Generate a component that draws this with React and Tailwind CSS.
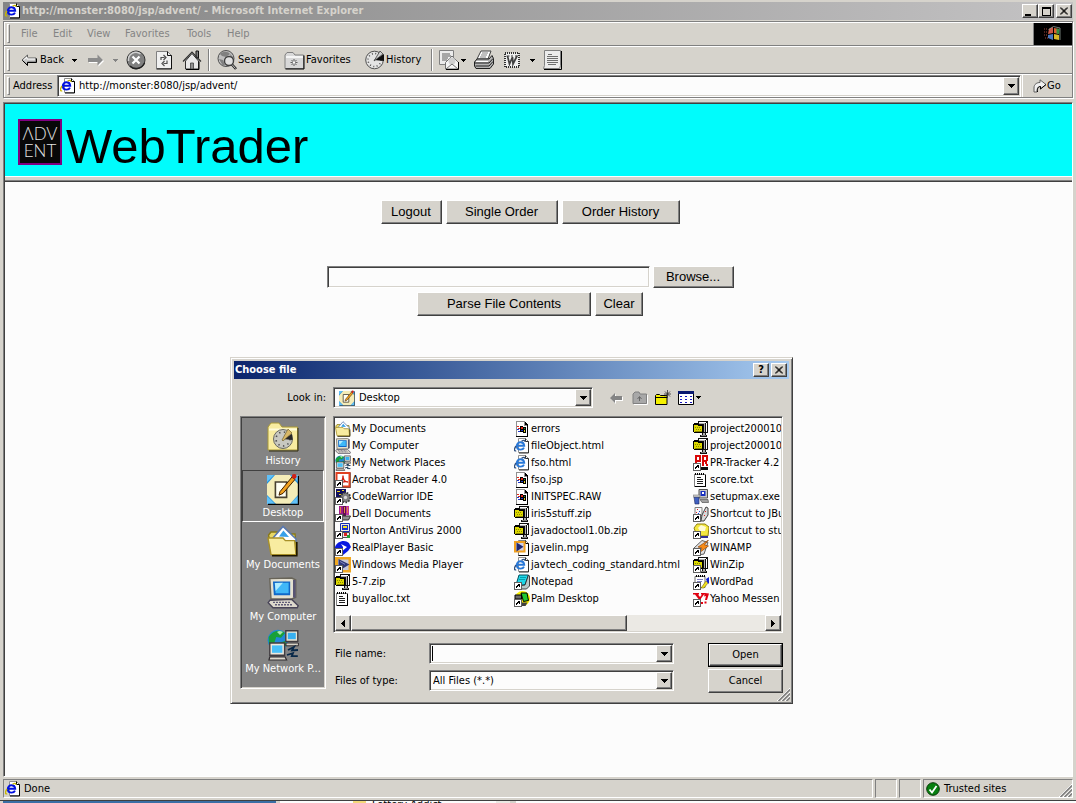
import React, { useState } from 'react';

const raised = 'border border-t-white border-l-white border-r-[#404040] border-b-[#404040] shadow-[inset_-1px_-1px_0_#808080] bg-[#d6d3cc]';
const sunken = 'border border-t-[#808080] border-l-[#808080] border-r-white border-b-white shadow-[inset_1px_1px_0_#404040,inset_-1px_-1px_0_#d6d3cc] bg-[#fcfcfc]';

/* ---------- icon helpers ---------- */

const Ico = ({ size = 16, box = 16, className = '', children }) => (
  <svg width={size} height={size} viewBox={`0 0 ${box} ${box}`} className={`shrink-0 ${className}`} aria-hidden="true">
    {children}
  </svg>
);

const Shortcut = () => (
  <g shapeRendering="crispEdges">
    <path d="M0 8h8v8H0z" fill="#606060" />
    <path d="M1 9h6v6H1z" fill="#fff" />
    <path d="M3 10h3v3H5v-1H4v1H3v1H2v-2h1v-1h1z" fill="#000" />
  </g>
);

const Caret = () => (
  <svg width="7" height="4" viewBox="0 0 7 4" className="shrink-0" aria-hidden="true" shapeRendering="crispEdges">
    <path d="M0 0h7v1h-1v1h-1v1h-1v1h-1v-1h-1v-1h-1v-1h-1z" fill="currentColor" />
  </svg>
);

const SmallCaret = () => (
  <svg width="5" height="3" viewBox="0 0 5 3" className="shrink-0" aria-hidden="true" shapeRendering="crispEdges">
    <path d="M0 0h5v1h-1v1h-1v1h-1v-1h-1v-1h-1z" fill="currentColor" />
  </svg>
);

const IePage = ({ soft = false }) => (
  <Ico>
    <path d="M4.500.500h7l3 3v11h-10z" fill="#fff" stroke="#909090" />
    <path d="M11.500.500v3h3v11.500H5" fill="none" stroke={soft ? '#303030' : '#000'} />
    <path d="M2.600 7.700h7.600C10 5.200 8.600 4.300 6.600 4.300 4.200 4.300 2.800 5.900 2.800 8s1.400 3.600 3.800 3.600c1.600 0 2.800-.600 3.400-2" fill="none" stroke={soft ? '#2878d8' : '#0010e0'} strokeWidth="1.900" />
    <path d="M2.200 12.800C-.400 13.600.200 10.500 2 8M7.500 3.200C9.500 2 11.200 2 10.800 3.800" fill="none" stroke={soft ? '#305080' : '#c8b800'} strokeWidth="1.300" />
  </Ico>
);

/* ---------- file icons ---------- */

const Zip = ({ children }) => (
  <Ico>
    <g shapeRendering="crispEdges">
      <path d="M5 0h10v12h-2v2h1v2H7v-2h2v-2H5z" fill="#101010" />
      <path d="M6 1h7v1H6zM13 2h1v9h-1z" fill="#fff" />
      <path d="M6 2h6v9h-1V3H6zM10 12h2v2h-2z" fill="#b0b0b0" />
      <path d="M8 14h5v1H8z" fill="#808080" />
      <path d="M0 3h1V2h4v1h1v1h4v8H1v-1H0z" fill="#000" />
      <path d="M1 4h4v1h4v6H1z" fill="#dcd800" />
      <path d="M2 6h1v1H2zM4 6h1v1H4zM6 6h1v1H6zM3 8h1v1H3zM5 8h1v1H5zM7 8h1v1H7zM2 10h7v1H2z" fill="#8c8800" />
    </g>
    {children}
  </Ico>
);

const Txt = () => (
  <Ico>
    <g shapeRendering="crispEdges">
      <path d="M1.500 2.500h11v12h-11z" fill="#fff" stroke="#808080" />
      <path d="M12 3h1v12H2v-1h10z" fill="#000" />
      <path d="M2 1h1v2H2zM4 1h1v2H4zM6 1h1v2H6zM8 1h1v2H8zM10 1h1v2h-1z" fill="#000" />
      <path d="M4 5h4v1H4zM4 7h6v1H4zM4 9h6v1H4zM4 11h6v1H4z" fill="#202020" />
    </g>
  </Ico>
);

const WinFile = () => (
  <Ico>
    <g shapeRendering="crispEdges">
      <path d="M2 0h9v1h1v1h1v1h1v13H2z" fill="#000" />
      <path d="M2 0h9v4h2v11H2z" fill="#909090" />
      <path d="M3 1h7v4h3v10H3z" fill="#fff" />
      <path d="M6 5h3v1h3v6H9v-1H6z" fill="#000" />
      <path d="M7 6h2v2H7zM3 5h2v1H3zM4 7h2v1H4z" fill="#e02818" />
      <path d="M10 7h1v1h-1z" fill="#18a030" />
      <path d="M7 9h2v1H7zM3 8h2v1H3zM4 10h2v1H4z" fill="#2038c8" />
      <path d="M10 9h1v2h-1z" fill="#e8d020" />
    </g>
  </Ico>
);

const DocsFolder = ({ size = 16 }) => (
  <Ico size={size}>
    <path d="M.800 5 2 3.500h3l1 1h8l1 10H2.500z" fill="#e8d868" stroke="#887818" strokeWidth=".700" />
    <path d="M3 6.500 8 .700 14.500 7v1H3z" fill="#fff" stroke="#5878b0" strokeWidth=".800" />
    <path d="M6 5.700 8.200 2.800 11 6z" fill="#38a0e8" />
    <path d="M.500 6.500H8l1.200 1.300h4.600l.700 7H2z" fill="#f8eca0" stroke="#a89028" strokeWidth=".700" />
    <path d="M14.900 8.500v6.900H2.500" fill="none" stroke="#201800" strokeWidth=".800" />
  </Ico>
);

const Computer = ({ size = 16 }) => (
  <Ico size={size}>
    <path d="M1.400.800 12.400.500l2 1v8.600L12.400 11H2z" fill="#e4e0d0" stroke="#686458" strokeWidth=".700" />
    <path d="M3 2.200h8.600v6.900H3.400z" fill="#1068c8" />
    <path d="m3.900 3 6.900-.100v5.200H4.300z" fill="#40b8f8" />
    <path d="M3.900 3 8 2.900 4.300 7z" fill="#b0ecff" />
    <path d="M13 1.500h1.300v8.800H13z" fill="#585474" />
    <path d="M1.500 11.600 12.400 11.200l3.200 3.200-.500 1H3L.600 12.800z" fill="#dcd8cc" stroke="#484458" strokeWidth=".700" />
    <path d="M3 12.700h8.500M4 13.900h9" stroke="#605c78" strokeWidth=".700" strokeDasharray="1 .500" />
  </Ico>
);

const Network = ({ size = 16 }) => (
  <Ico size={size}>
    <circle cx="5.500" cy="5.600" r="5.200" fill="#2088d8" />
    <path d="M.800 4C3 .800 6 0 9 2L7 4.400 4.600 4 3.500 7.500 1 8zM6 7l3-1 1 2-3 2z" fill="#18a038" />
    <path d="M5 1.500c1-.800 2-.500 3 0L6.500 3z" fill="#a8e8b0" />
    <path d="M9.400.900h6v5.300h-6z" fill="#e8e4d4" stroke="#403c40" strokeWidth=".700" />
    <path d="M10.400 1.900h4v3.200h-4z" fill="#38b0f0" />
    <path d="M9.500 7h6.200v1.400H9.500z" fill="#d8d4c8" stroke="#302c30" strokeWidth=".500" />
    <path d="M1.400 7h7.400v6.100H1.400z" fill="#ece8dc" stroke="#403c40" strokeWidth=".700" />
    <path d="M2.500 8.200h5.200v3.700H2.500z" fill="#48c0f8" />
    <path d="M1.400 13.900h7.600l.800 1.600H1z" fill="#dcd8cc" stroke="#302c30" strokeWidth=".600" />
    <path d="m10.500 10.500 3-1.500-1 1.700 3-.200M10 13l3-.900-.600 1.500h3" fill="none" stroke="#082848" strokeWidth=".900" />
  </Ico>
);

const DesktopIcon = ({ size = 16 }) => (
  <Ico size={size}>
    <path d="M0 1h15.500v14.500H0z" fill="#2090e0" />
    <path d="M0 1h3.500L0 4.500zM12 1h3.500v3.500zM0 11.500v4h4zM15.500 11.500v4h-4z" fill="#60c0f8" />
    <path d="M4 1h7.500l4 4.500v5.500l-4 4.500H4.500L0 11V5.500z" fill="#f4ecb8" />
    <path d="M4.200 4.500h5.600v7.700H4.200z" fill="#fffff4" stroke="#484030" strokeWidth=".800" />
    <path d="m6.500 9.300 6-7.300 1.500 1.200-6 7-2 .900z" fill="#f0a020" stroke="#402000" strokeWidth=".500" />
    <circle cx="13.600" cy="1.700" r="1.200" fill="#d02018" />
    <path d="M15.700 1.500v14.200H.500" fill="none" stroke="#000" strokeWidth=".600" />
  </Ico>
);

const HistoryFolder = ({ size = 32 }) => (
  <Ico size={size} box={32}>
    <path d="M1 29V6l3-4h8l3 4h15.500v23z" fill="#f8eca0" stroke="#a89838" />
    <path d="M2 8.500h28" stroke="#fffbd8" strokeWidth="2" />
    <path d="M31 7v23H2" fill="none" stroke="#302c10" />
    <circle cx="16" cy="18" r="9.500" fill="#c8c8c0" stroke="#686860" />
    <circle cx="16" cy="18" r="7" fill="none" stroke="#505050" strokeWidth="1.600" strokeDasharray="1.400 3.400" />
    <path d="m16 18 9-5 .600 6z" fill="#282828" />
    <path d="m15 19 6-11 4 4-9 8z" fill="#d8b868" stroke="#605020" strokeWidth=".600" />
  </Ico>
);

const Acrobat = () => (
  <Ico>
    <path d="M1.500 1h13v13.500h-13z" fill="#fff" stroke="#e04020" strokeWidth="2" />
    <path d="M5 11.500c2-2 3-5 3-8 0 4 2 6.500 5 6.500-3-1-6 0-8 1.500z" fill="#fff" stroke="#d02010" strokeWidth="1.300" />
    <path d="M15.700.500v15H8" fill="none" stroke="#401008" strokeWidth=".600" />
    <Shortcut />
  </Ico>
);

const CodeWarrior = () => (
  <Ico>
    <path d="M1 0h10v9H1z" fill="#101060" />
    <path d="M2 2h3v1H2zM4 5h3v1H4zM7 1h2v1H7z" fill="#f0d820" />
    <circle cx="10.500" cy="8.500" r="4.800" fill="#808080" stroke="#383838" strokeWidth="1.800" strokeDasharray="1.600 1.300" />
    <circle cx="10.500" cy="8.500" r="1.700" fill="#d8d8d8" />
    <Shortcut />
  </Ico>
);

const Dell = () => (
  <Ico>
    <path d="M4 0h4v9H4z" fill="#a01888" />
    <path d="M8 0h3v10H8z" fill="#601050" />
    <path d="M11 0h3v9h-3z" fill="#c030a0" />
    <path d="M5 1h1v6H5zM9 1h1v6H9zM12 1h1v6h-1z" fill="#e08040" />
    <path d="M7 10h8.500l-2 4H7z" fill="#909090" stroke="#303030" />
    <Shortcut />
  </Ico>
);

const Norton = () => (
  <Ico>
    <path d="M5.500.500h9v8h-9z" fill="#f0ecd8" stroke="#1830b0" />
    <path d="M7 2h6v5H7z" fill="#1830d0" />
    <path d="M8 3h4v2H8z" fill="#f0e020" />
    <path d="M3.500 9.500h11v5h-11z" fill="#e8e8e8" stroke="#505050" />
    <path d="M9 10h3v3H9z" fill="#e02020" />
    <path d="M12 12h3v3h-3z" fill="#20a030" />
    <Shortcut />
  </Ico>
);

const Real = () => (
  <Ico>
    <path d="M0 7C2 1 10-1 14 3l2 4-3 4-5 4V9L0 10z" fill="#0818e0" />
    <path d="M6 4 12 7 8 10.500V7z" fill="#fff" />
    <Shortcut />
  </Ico>
);

const MediaPlayer = () => (
  <Ico>
    <path d="M0 0h16v15.500H0z" fill="#f0a820" />
    <path d="M3 2.500h10.500V13H3z" fill="#c8c8d8" />
    <path d="m3.500 2 11 5.500-11 6.500z" fill="#303878" />
    <path d="m5 4.500 5 2.800" stroke="#8088c0" />
    <Shortcut />
  </Ico>
);

const Mpg = () => (
  <Ico>
    <path d="M4.500.500h7l3 3v12h-10z" fill="#fff" stroke="#808080" />
    <path d="M11.500.500v3h3v12h-10" fill="none" stroke="#000" />
    <path d="M1 2h9.500v9.500H1z" fill="#d0d0e8" stroke="#f0a020" strokeWidth="2" />
    <path d="m2.500 2.500 7 4.300-7 4.700z" fill="#202870" />
  </Ico>
);

const Notepad = () => (
  <Ico>
    <path d="M5 1h9.500L11 11H2z" fill="#20d8e8" stroke="#005060" />
    <path d="m11 11 3.500-10 1 1v10l-3 3H5l-1-3z" fill="#b8c8c8" stroke="#202020" strokeWidth=".800" />
    <path d="M6 3.500h6M5 5.500h6" stroke="#0090a0" strokeWidth=".800" />
    <Shortcut />
  </Ico>
);

const Palm = () => (
  <Ico>
    <circle cx="8.500" cy="7.500" r="7.500" fill="#f8f000" />
    <path d="M7 2h6l1.500 7.500-5 1z" fill="#20c830" stroke="#000" />
    <path d="M1 4h6.500v4H1z" fill="#686868" stroke="#000" />
    <path d="M8 11.500h5.500l-2 3.500H8z" fill="#404040" />
    <Shortcut />
  </Ico>
);

const PrTracker = () => (
  <Ico>
    <g shapeRendering="crispEdges">
      <path d="M2 0h5l1 1v5L7 7H4v4H2zM4 2v3h2V2zM9 0h5l1 1v4l-1 1 1 5h-2l-1-4h-1v4H9zM11 2v3h2V2z" fill="#d80808" fillRule="evenodd" />
      <path d="M8 12h7v3H8z" fill="#101010" />
    </g>
    <Shortcut />
  </Ico>
);

const Setup = () => (
  <Ico>
    <path d="M6 .500h8.500v8.500H6z" fill="#c8c8c8" stroke="#505050" />
    <path d="M7.500 2h5v5h-5z" fill="#1830c0" />
    <path d="M9 3h2v2H9z" fill="#fff" />
    <path d="M7 10.500h8l.500 3H9z" fill="#a0a0a0" stroke="#404040" strokeWidth=".600" />
    <path d="M1 8h5v7H2z" fill="#4060c0" stroke="#202860" strokeWidth=".600" />
    <path d="M0 6h7v2H0z" fill="#d0d0d0" stroke="#606060" strokeWidth=".500" />
  </Ico>
);

const JBuilder = () => (
  <Ico>
    <path d="M2 1.500h7v8H2z" fill="#f8f8f8" stroke="#808080" />
    <path d="M4 3h1v1H4zM3 6h1v1H3z" fill="#e02020" />
    <path d="M6 5h1v1H6zM5 7h1v1H5z" fill="#2040e0" />
    <path d="m9 9 4-8 2 1v7l-4 6H8z" fill="#d8d8d8" stroke="#404040" />
    <path d="M12 5h1v1h-1zM11 9h1v1h-1z" fill="#e02020" />
    <Shortcut />
  </Ico>
);

const StuFolder = () => (
  <Ico>
    <path d="M1 5 4 1h8l4 3-1 9H4z" fill="#f4e840" stroke="#908010" />
    <path d="m5 5 3-3 5 2-1 4H7z" fill="#fffcd8" />
    <path d="M8 13h7v2H8z" fill="#303090" />
    <Shortcut />
  </Ico>
);

const Winamp = () => (
  <Ico>
    <path d="M1 8 9 .500l6 2L11 14l-6 1z" fill="#e0e0e0" stroke="#606060" />
    <path d="M15.500 0 5 7l4 1-3 5 9.500-7-4-1z" fill="#f88c18" stroke="#803800" strokeWidth=".600" />
    <Shortcut />
  </Ico>
);

const WordPad = () => (
  <Ico>
    <path d="M2 2.500h10v11H2z" fill="#fff" stroke="#707070" />
    <path d="M3 1h1v2H3zM5 1h1v2H5zM7 1h1v2H7zM9 1h1v2H9zM11 1h1v2h-1z" fill="#000" />
    <path d="M4 5h6v1H4zM4 7h5v1H4z" fill="#8080c0" />
    <path d="m8 14 5-7 2 2-4 5z" fill="#f0e020" stroke="#605000" strokeWidth=".500" />
    <path d="m13 5 3-2v7l-2-2z" fill="#1020d0" />
    <Shortcut />
  </Ico>
);

const Yahoo = () => (
  <Ico>
    <path d="M0 2h6v1.600H5L7 6l2-2.400H8V2h4v1.600h-1L8 7.600V11h2v2H4v-2h1.500V8L2 3.600H0z" fill="#e00010" />
    <path d="m12 2 4 .400L14 9h-2l1-4-2 .600zM11.500 10.500h2v2h-2z" fill="#e00010" />
    <Shortcut />
  </Ico>
);

/* ---------- browser toolbar icons ---------- */

const BackIcon = () => (
  <Ico>
    <path d="M1 8 6.500 3v3H15v4H6.500v3z" fill="#c8c8c8" stroke="#606060" />
    <path d="m1.500 8.500 5 5v-3h9v-4" fill="none" stroke="#000" />
    <path d="M2.500 8 6 5v2h8" fill="none" stroke="#fff" />
  </Ico>
);

const ForwardIcon = () => (
  <Ico>
    <path d="M16 9 10.500 14.500V11H1V7h9.500V4z" fill="#fff" />
    <path d="M15 8 9.500 2.500V6H0v4h9.500v3.500z" fill="#8c8c8c" />
  </Ico>
);

const StopIcon = () => (
  <Ico size={20} box={20}>
    <circle cx="10" cy="10" r="9" fill="#808080" stroke="#303030" />
    <path d="M2.500 11a7.500 7.500 0 0 1 12-7" fill="none" stroke="#d0d0d0" strokeWidth="1.500" />
    <path d="M4 16a9 9 0 0 0 14.500-3" fill="none" stroke="#202020" strokeWidth="1.500" />
    <path d="m6.500 6.500 7 7M13.500 6.500l-7 7" stroke="#fff" strokeWidth="2.200" />
  </Ico>
);

const RefreshIcon = () => (
  <Ico size={20} box={20}>
    <path d="M2.500 1.500h11l4 4v13h-15z" fill="#f0f0f0" stroke="#808080" />
    <path d="M13.500 1.500v4h4v13.500h-15" fill="none" stroke="#101010" />
    <path d="M7 10V7.500h3.500M9.500 5l2.500 2.500L9.500 10" fill="none" stroke="#505050" strokeWidth="1.200" />
    <path d="M13 10.500v3H9.500M10.500 11 8 13.500l2.500 2.500" fill="none" stroke="#505050" strokeWidth="1.200" />
  </Ico>
);

const HomeIcon = () => (
  <Ico size={20} box={20}>
    <path d="M14 1h2.500v7H14z" fill="#808080" stroke="#101010" />
    <path d="M3.500 11v8h13v-8L10 3.500z" fill="#e8e8e8" stroke="#303030" />
    <path d="M1 11.500 10 2l9 9.500" fill="none" stroke="#303030" strokeWidth="1.200" />
    <path d="M8.500 13h3v6h-3z" fill="#909090" stroke="#404040" strokeWidth=".800" />
    <path d="M17 11.500V19.500H4" fill="none" stroke="#000" />
  </Ico>
);

const SearchIcon = () => (
  <Ico size={20} box={20}>
    <circle cx="9" cy="8.500" r="8" fill="#c0c0c0" stroke="#505050" />
    <path d="M3 4c3-3 8-3 10 0L9 7 5 6zM2 9l4 1 2 5-2 1zM13 4l3 3-2 2z" fill="#808080" />
    <circle cx="12" cy="11" r="4.500" fill="#e0e0e0" stroke="#404040" strokeWidth="1.400" />
    <path d="m15 14.500 4 4.500" stroke="#202020" strokeWidth="2.600" />
    <path d="m15 14.500 3.500 4" stroke="#c8c8c8" strokeWidth="1" />
  </Ico>
);

const FavoritesIcon = () => (
  <Ico size={21} box={21}>
    <path d="M1 18.500V5l2-2.500h6L11 5h8.500v13.500z" fill="#d8d8d8" stroke="#808080" />
    <path d="M2 7h17" stroke="#fff" strokeWidth="1.500" />
    <path d="M20 5.500V19H1.500" fill="none" stroke="#000" />
    <path d="M10 9v7M6.500 12.500h7M7.500 10l5 5M12.500 10l-5 5" stroke="#404040" strokeWidth=".800" />
    <circle cx="10" cy="12.500" r="1.200" fill="#fff" />
  </Ico>
);

const HistoryIcon = () => (
  <Ico size={20} box={20}>
    <circle cx="9.500" cy="10" r="8.800" fill="#e4e4e4" stroke="#505050" />
    <circle cx="9.500" cy="10" r="6.500" fill="none" stroke="#505050" strokeWidth="1.500" strokeDasharray="1 2.400" />
    <path d="m9 10 10-6v7z" fill="#101010" />
    <path d="M9 11 15 1l3 3z" fill="#d0d0d0" stroke="#404040" strokeWidth=".800" />
  </Ico>
);

const MailIcon = () => (
  <Ico size={20} box={20}>
    <path d="M.500.500h14v14H.500z" fill="#ececec" stroke="#808080" />
    <path d="M3 4h8M3 6h9M3 8h6M3 10h5" stroke="#606060" />
    <path d="M6.500 12.500 13 6l6.500 6.500v6.500h-13z" fill="#f4f4f4" stroke="#707070" />
    <circle cx="13" cy="11" r="3.500" fill="#d0d0d0" />
    <path d="m7 19 6-5 6 5" fill="none" stroke="#707070" />
    <path d="M19.500 12v7.500H7" fill="none" stroke="#000" />
  </Ico>
);

const PrintIcon = () => (
  <Ico size={20} box={20}>
    <path d="M7 1h10l-3 8H3z" fill="#fff" stroke="#404040" />
    <path d="M8 3h6M7 5h6M6 7h6" stroke="#808080" />
    <path d="M3 9h12l3-3.500 1.500 3V14L16 18.500H2L.500 16v-4z" fill="#b4b4b4" stroke="#202020" />
    <path d="M1 13h14l4-4.500M1.500 16H15l4-4.500" fill="none" stroke="#202020" />
    <path d="M2 11.500h12" stroke="#fff" />
  </Ico>
);

const WordIcon = () => (
  <Ico>
    <path d="M1 1h14v14H1z" fill="#f0f0f0" stroke="#303030" strokeWidth="2" strokeDasharray="1 1" />
    <path d="m3.500 4 2 8 3-7 .500 7 4-8" fill="none" stroke="#404040" strokeWidth="1.700" />
    <path d="M2.500 4h3M7 4h2M11 4h3" stroke="#404040" />
  </Ico>
);

const NotesIcon = () => (
  <Ico size={20} box={20}>
    <path d="M1.500.500h16v15l-1 3H.500l1-3z" fill="#ececec" stroke="#808080" />
    <path d="M18.500 1v18.500H1" fill="none" stroke="#000" />
    <path d="M5 4.500h4M4 6.500h11M4 8.500h11M4 10.500h11M4 12.500h11M5 14.500h8" stroke="#606060" strokeWidth=".900" />
  </Ico>
);

const GoIcon = () => (
  <Ico size={14} box={14}>
    <path d="M1 13V9c0-4 3-5.500 6-5.500V.800L13 5.500 7.500 10V7.500C5 7.500 4 9 4 13z" fill="#f0f0f0" stroke="#606060" />
    <path d="M4.500 13c-.500-4 1-5.500 3-5.500V10L13 5.500" fill="none" stroke="#000" />
  </Ico>
);

const WindowsFlag = () => (
  <Ico size={20} box={20}>
    <path d="m6 5 4-2v6L5 10z" fill="#c85848" />
    <path d="m11 4 5 1v5l-5-1z" fill="#d86030" />
    <path d="m13.500 4.500 3 .500-.500 5-2.500-.500z" fill="#309040" />
    <path d="m5 11 5-1v6l-5-2z" fill="#4878c0" />
    <path d="m11 10 5 1v5l-5-1z" fill="#d8b828" />
    <path d="M1 5h3M1 8h3M1 11h3M2 14h3" stroke="#a04840" strokeDasharray="1 1" />
    <path d="m5.500 5.500 5-3 6.500 1.500v12" fill="none" stroke="#a0b0a8" strokeWidth=".700" />
  </Ico>
);

const Grip = () => <span className="w-[3px] self-stretch my-[2px] ml-[3px] border border-t-white border-l-white border-r-[#808080] border-b-[#808080]" />;

const ToolSep = () => <span className="w-[2px] h-[22px] border-l border-l-[#808080] border-r border-r-white" />;

const ResizeGrip = () => (
  <svg width="13" height="13" viewBox="0 0 13 13" className="shrink-0" aria-hidden="true">
    <path d="M0 13 13 0M4 13l9-9M8 13l5-5" stroke="#fff" />
    <path d="M1.500 13 13 1.500M5.500 13 13 5.500M9.500 13 13 9.500" stroke="#808080" strokeWidth="1.600" />
  </svg>
);

const WinButton = ({ label, children }) => (
  <button aria-label={label} className={`w-4 h-[14px] flex items-center justify-center ${raised}`}>
    {children}
  </button>
);

const CloseGlyph = () => (
  <Ico size={8} box={8}><path d="m0 .500 7 7M1 .500l7 7M7 .500l-7 7M8 .500l-7 7" stroke="#000" /></Ico>
);

const PageButton = ({ className, children }) => (
  <button className={`font-['Liberation_Sans',Arial,sans-serif] text-[13px] leading-4 whitespace-nowrap text-black ${raised} ${className}`}>
    {children}
  </button>
);

const ComboArrow = () => (
  <span className={`w-4 shrink-0 self-stretch flex items-center justify-center ${raised}`}><Caret /></span>
);

/* ---------- data ---------- */

const menus = [
  ['File', 'w-8'], ['Edit', 'w-[34px]'], ['View', 'w-[38px]'], ['Favorites', 'w-[62px]'], ['Tools', 'w-10'], ['Help', 'w-10'],
];

const places = [
  { name: 'History', icon: <HistoryFolder /> },
  { name: 'Desktop', icon: <DesktopIcon size={32} /> },
  { name: 'My Documents', icon: <DocsFolder size={32} /> },
  { name: 'My Computer', icon: <Computer size={32} /> },
  { name: 'My Network P...', icon: <Network size={32} /> },
];

const html = <IePage soft />;

const fileColumns = [
  [
    ['My Documents', <DocsFolder />],
    ['My Computer', <Computer />],
    ['My Network Places', <Network />],
    ['Acrobat Reader 4.0', <Acrobat />],
    ['CodeWarrior IDE', <CodeWarrior />],
    ['Dell Documents', <Dell />],
    ['Norton AntiVirus 2000', <Norton />],
    ['RealPlayer Basic', <Real />],
    ['Windows Media Player', <MediaPlayer />],
    ['5-7.zip', <Zip />],
    ['buyalloc.txt', <Txt />],
  ],
  [
    ['errors', <WinFile />],
    ['fileObject.html', html],
    ['fso.html', html],
    ['fso.jsp', <WinFile />],
    ['INITSPEC.RAW', <WinFile />],
    ['iris5stuff.zip', <Zip />],
    ['javadoctool1.0b.zip', <Zip />],
    ['javelin.mpg', <Mpg />],
    ['javtech_coding_standard.html', html],
    ['Notepad', <Notepad />],
    ['Palm Desktop', <Palm />],
  ],
  [
    ['project200010', <Zip />],
    ['project200010', <Zip />],
    ['PR-Tracker 4.2', <PrTracker />],
    ['score.txt', <Txt />],
    ['setupmax.exe', <Setup />],
    ['Shortcut to JBu', <JBuilder />],
    ['Shortcut to stu', <StuFolder />],
    ['WINAMP', <Winamp />],
    ['WinZip', <Zip><Shortcut /></Zip>],
    ['WordPad', <WordPad />],
    ['Yahoo Messen', <Yahoo />],
  ],
];

/* ---------- dialog ---------- */

const FileDialog = () => {
  const [place, setPlace] = useState('Desktop');
  const [fileName, setFileName] = useState('');

  return (
    <section role="dialog" aria-label="Choose file" className="absolute left-[225px] top-[175px] w-[563px] p-[3px] border border-t-[#d6d3cc] border-l-[#d6d3cc] border-r-[#404040] border-b-[#404040] shadow-[inset_1px_1px_0_#fff,inset_-1px_-1px_0_#808080] bg-[#d6d3cc]">
      <header className="h-[18px] flex items-center gap-[2px] pl-px pr-[2px] bg-linear-to-r from-[#0c246c] to-[#a6caf0]">
        <h2 className="flex-1 font-bold text-white">Choose file</h2>
        <WinButton label="Help"><span className="font-bold text-black leading-3">?</span></WinButton>
        <WinButton label="Close"><CloseGlyph /></WinButton>
      </header>

      <div className="flex items-center pt-2 pl-[6px]">
        <label htmlFor="lookin" className="w-[86px] text-right">Look in:</label>
        <div className={`ml-[7px] w-[260px] h-[21px] p-px flex items-center ${sunken}`}>
          <span className="ml-1"><DesktopIcon /></span>
          <select id="lookin" className="flex-1 pl-1 appearance-none bg-transparent outline-none" defaultValue="Desktop">
            <option>Desktop</option>
          </select>
          <ComboArrow />
        </div>
        <div className="ml-4 flex items-center gap-[7px]">
          <button aria-label="Back" className="w-4">
            <Ico><path d="m2 9 5-5v3h7v4H7v3z" fill="#fff" /><path d="m1 8 5-5v3h7v4H6v3z" fill="#848484" /></Ico>
          </button>
          <button aria-label="Up one level">
            <Ico><path d="M1 13.500V4l2-2h4l1 2h6.500v9.500z" fill="#a8a8a8" stroke="#808080" /><path d="M15.500 5v9.500H2" fill="none" stroke="#fff" /><path d="M7.500 11V7M5.500 9l2-2.500 2 2.500" fill="none" stroke="#686868" /></Ico>
          </button>
          <button aria-label="New folder">
            <Ico><path d="M.500 14.500v-9l1-1h3l1 1h6.500v9z" fill="#f4f000" stroke="#000" /><path d="M1 7.500h11" stroke="#000" /><path d="M12.500 0v8M9 4h7M10 1.500l5 5M15 1.500l-5 5" stroke="#303030" strokeWidth=".800" /></Ico>
          </button>
          <button aria-label="View menu" className="flex items-center gap-[2px]">
            <Ico><path d="M.500 1.500h15v13H.500z" fill="#fff" stroke="#000" /><path d="M0 1h16v3H0z" fill="#081870" /><path d="M2 6h2v1H2zM7 6h2v1H7zM12 6h2v1h-2zM2 9h2v1H2zM7 9h2v1H7zM12 9h2v1h-2zM2 12h2v1H2zM7 12h2v1H7zM12 12h2v1h-2z" fill="#1818c0" /></Ico>
            <SmallCaret />
          </button>
        </div>
      </div>

      <div className="flex gap-[7px] pt-2 px-[6px] pb-[7px]">
        <nav className="w-[86px] h-[273px] shrink-0 p-px border border-t-[#808080] border-l-[#808080] border-r-white border-b-white shadow-[inset_1px_1px_0_#404040,inset_-1px_-1px_0_#d6d3cc] bg-[#848484]">
          {places.map((p) => (
            <button
              key={p.name}
              onClick={() => setPlace(p.name)}
              className={`w-full h-[52px] flex flex-col items-center pt-[2px] gap-px border whitespace-nowrap text-white ${place === p.name ? 'border-t-[#404040] border-l-[#404040] border-r-white border-b-white' : 'border-transparent'}`}
            >
              {p.icon}
              <span>{p.name}</span>
            </button>
          ))}
        </nav>

        <div className="flex-1 min-w-0">
          <div className={`h-[217px] p-px flex flex-col ${sunken}`}>
            <div className="flex-1 flex overflow-hidden pt-[2px]">
              {fileColumns.map((col, c) => (
                <ul key={c} className="w-[179px] shrink-0">
                  {col.map(([name, icon], i) => (
                    <li key={i} className="h-[17px] flex items-center gap-px whitespace-nowrap">
                      {icon}
                      <span>{name}</span>
                    </li>
                  ))}
                </ul>
              ))}
            </div>
            <div className="h-4 flex bg-[#ebe9e4]">
              <button aria-label="Scroll left" className={`w-4 flex items-center justify-center ${raised}`}>
                <svg width="4" height="7" viewBox="0 0 4 7" shapeRendering="crispEdges"><path d="M4 0v7H3V6H2V5H1V4H0V3h1V2h1V1h1V0z" /></svg>
              </button>
              <span className={`w-[276px] ${raised}`} />
              <span className="flex-1" />
              <button aria-label="Scroll right" className={`w-4 flex items-center justify-center ${raised}`}>
                <svg width="4" height="7" viewBox="0 0 4 7" shapeRendering="crispEdges"><path d="M0 0v7h1V6h1V5h1V4h1V3H3V2H2V1H1V0z" /></svg>
              </button>
            </div>
          </div>

          <div className="mt-[10px] flex justify-between">
            <div className="space-y-[6px]">
              <div className="flex items-center">
                <label htmlFor="fname" className="w-24 pl-[2px]">File name:</label>
                <div className={`w-[245px] h-[21px] p-px flex items-center ${sunken}`}>
                  <span className="ml-px w-px h-[15px] bg-black" />
                  <input id="fname" value={fileName} onChange={(e) => setFileName(e.target.value)} className="flex-1 min-w-0 outline-none bg-transparent" />
                  <ComboArrow />
                </div>
              </div>
              <div className="flex items-center">
                <label htmlFor="ftype" className="w-24 pl-[2px]">Files of type:</label>
                <div className={`w-[245px] h-[21px] p-px flex items-center ${sunken}`}>
                  <select id="ftype" className="flex-1 pl-[2px] appearance-none bg-transparent outline-none">
                    <option>All Files (*.*)</option>
                  </select>
                  <ComboArrow />
                </div>
              </div>
            </div>
            <div className="flex flex-col gap-[2px]">
              <span className="bg-black p-px flex"><button className={`w-[73px] h-[22px] ${raised}`}>Open</button></span>
              <button className={`w-[75px] h-6 ${raised}`}>Cancel</button>
            </div>
          </div>
        </div>
      </div>
      <span className="absolute right-[2px] bottom-[2px]"><ResizeGrip /></span>
    </section>
  );
};

/* ---------- page ---------- */

export default function App() {
  return (
    <div className="min-h-screen flex flex-col bg-[#d6d3cc] text-black text-[11px] leading-[14px] font-['DejaVu_Sans_Condensed',Tahoma,'Noto_Sans',sans-serif]">
      <header className="mt-[2px] mx-[3px] h-[18px] flex items-center pl-[2px] pr-px bg-linear-to-r from-[#848484] to-[#c4c3c4]">
        <IePage />
        <h1 className="flex-1 pl-px font-bold text-[#d6d3cc]">http://monster:8080/jsp/advent/ - Microsoft Internet Explorer</h1>
        <WinButton label="Minimize"><span className="w-[6px] h-[2px] mt-[7px] mr-1 bg-black" /></WinButton>
        <WinButton label="Maximize"><span className="w-[9px] h-[9px] border border-t-2 border-black" /></WinButton>
        <span className="w-[2px]" />
        <WinButton label="Close"><CloseGlyph /></WinButton>
      </header>

      <div className="mt-px mx-[3px] border border-[#808080] shadow-[inset_1px_1px_0_#fff,1px_1px_0_#fff]">
        <div className="h-6 flex items-center border-b border-b-[#808080]">
          <Grip />
          <nav className="flex-1 flex pl-[11px] text-[#848484]">
            {menus.map(([name, width]) => (
              <button key={name} className={`text-left ${width}`}>{name}</button>
            ))}
          </nav>
          <span className="w-[39px] self-stretch mt-px border-l border-l-[#808080] bg-black flex items-center justify-center"><WindowsFlag /></span>
        </div>

        <div className="h-7 flex items-center border-t border-t-white border-b border-b-[#808080]">
          <Grip />
          <button className="ml-[11px] flex items-center gap-[3px]"><BackIcon />Back</button>
          <span className="ml-2"><SmallCaret /></span>
          <button aria-label="Forward" className="ml-[11px]"><ForwardIcon /></button>
          <span className="ml-[9px] text-[#848484]"><SmallCaret /></span>
          <button aria-label="Stop" className="ml-2"><StopIcon /></button>
          <button aria-label="Refresh" className="ml-2"><RefreshIcon /></button>
          <button aria-label="Home" className="ml-2 mr-[6px]"><HomeIcon /></button>
          <ToolSep />
          <button className="ml-[7px] w-[67px] flex items-center gap-px"><SearchIcon />Search</button>
          <button className="w-[81px] flex items-center gap-px"><FavoritesIcon />Favorites</button>
          <button className="w-[66px] flex items-center gap-px"><HistoryIcon />History</button>
          <ToolSep />
          <button aria-label="Mail" className="ml-[6px] flex items-center gap-[2px]"><MailIcon /><SmallCaret /></button>
          <button aria-label="Print" className="ml-2"><PrintIcon /></button>
          <button aria-label="Edit" className="ml-[10px] flex items-center gap-[10px]"><WordIcon /><SmallCaret /></button>
          <button aria-label="Discuss" className="ml-2"><NotesIcon /></button>
        </div>

        <div className="h-[23px] flex items-center border-t border-t-white">
          <Grip />
          <label htmlFor="address" className="w-[47px] pl-[3px]">Address</label>
          <div className={`flex-1 h-[22px] p-px flex items-center ${sunken}`}>
            <span className="pl-px"><IePage /></span>
            <input id="address" defaultValue="http://monster:8080/jsp/advent/" className="flex-1 min-w-0 pl-[3px] bg-transparent outline-none" />
            <ComboArrow />
          </div>
          <button className="w-[50px] self-stretch ml-px pl-[10px] border-l border-l-white flex items-center"><GoIcon />Go</button>
        </div>
      </div>

      <main className="flex-1 mt-1 mx-[3px] flex flex-col border border-t-[#808080] border-l-[#808080] border-r-white border-b-white">
        <div className="border-t border-l border-[#404040] flex-1 flex flex-col">
          <div className="h-[72px] pl-[13px] flex items-center bg-[#00fcfc]">
            <svg width="44" height="46" viewBox="0 0 44 46" role="img" aria-label="Advent" className="mt-[3px]">
              <path d="M1 1h42v44H1z" fill="#080808" stroke="#800080" strokeWidth="2" />
              <text fill="#e4e4e4" fontFamily="Lato, sans-serif" fontWeight="300" fontSize="17" textAnchor="middle">
                <tspan x="22" y="21">ΛDV</tspan>
                <tspan x="22" y="38">ENT</tspan>
              </text>
            </svg>
            <span className="pl-1 pt-3 text-[49px] leading-12 font-['Liberation_Sans',Arial,sans-serif]">WebTrader</span>
          </div>
          <div className="h-[6px] border-t border-t-white border-b border-b-[#404040] shadow-[inset_0_-1px_0_#808080] bg-[#d6d3cc]" />

          <div className="relative flex-1 min-h-[580px] bg-[#fcfcfc]">
            <div className="pr-[17px] pt-[18px] flex flex-col items-center">
              <div className="flex gap-1">
                <PageButton className="w-[61px] h-6">Logout</PageButton>
                <PageButton className="w-28 h-6">Single Order</PageButton>
                <PageButton className="w-[118px] h-6">Order History</PageButton>
              </div>
              <div className="mt-[42px] flex gap-[3px]">
                <input aria-label="Order file" className={`w-[323px] h-[22px] px-1 outline-none ${sunken}`} />
                <PageButton className="w-[81px] h-[22px]">Browse...</PageButton>
              </div>
              <div className="mt-1 flex gap-1">
                <PageButton className="w-[174px] h-6">Parse File Contents</PageButton>
                <PageButton className="w-12 h-6">Clear</PageButton>
              </div>
            </div>
            <FileDialog />
          </div>
        </div>
      </main>

      <footer className="mt-[2px] mx-[3px] mb-[2px] h-[19px] flex gap-[2px]">
        <div className="flex-1 flex items-center gap-[3px] pl-px border border-t-[#808080] border-l-[#808080] border-r-white border-b-white"><IePage />Done</div>
        <div className="w-[22px] border border-t-[#808080] border-l-[#808080] border-r-white border-b-white" />
        <div className="w-[22px] border border-t-[#808080] border-l-[#808080] border-r-white border-b-white" />
        <div className="w-[150px] flex items-center pl-[2px] border border-t-[#808080] border-l-[#808080] border-r-white border-b-white">
          <Ico size={14} box={14}><circle cx="7" cy="7" r="6.300" fill="#088010" stroke="#083808" /><path d="m3.500 7.500 2.500 3L10.500 4" fill="none" stroke="#fff" strokeWidth="1.800" /></Ico>
          <span className="flex-1 pl-1">Trusted sites</span>
          <span className="self-end"><ResizeGrip /></span>
        </div>
      </footer>

      {/* strip of the windows lying behind */}
      <div className="h-[3px] flex overflow-hidden border-t border-t-[#404040] bg-[#fcfcfc]">
        <span className="w-[3px] bg-[#d6d3cc]" />
        <span className="w-[273px] bg-[#3a6ea5]" />
        <span className="w-1 bg-[#d6d3cc]" />
        <span className="w-[73px]" />
        <span className="w-[13px] bg-[#f4d878]" />
        <span className="w-[130px] h-[11px] pl-[6px] leading-[7px]">Lottery Addict</span>
        <span className="w-[14px] bg-[#ebe9e4]" />
        <span className="w-[6px] bg-[#d6d3cc]" />
      </div>
    </div>
  );
}
